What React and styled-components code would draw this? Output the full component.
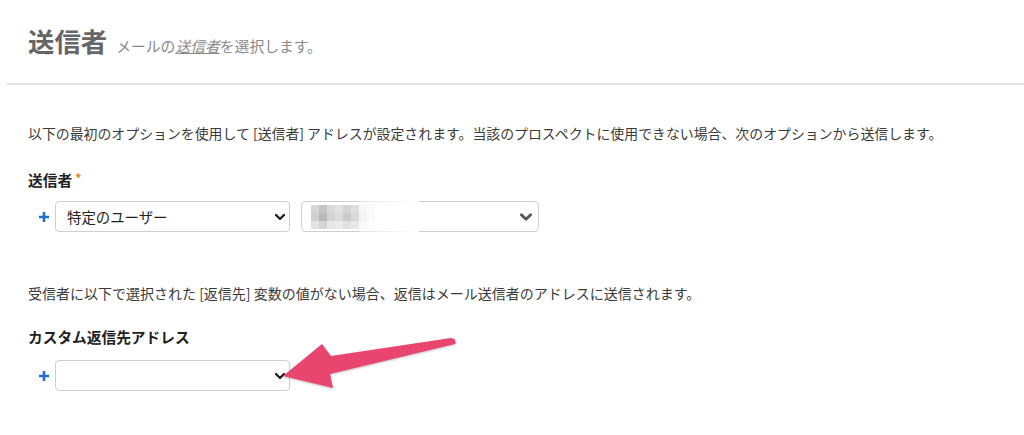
import React from "react";
import styled, { createGlobalStyle } from "styled-components";

const GlobalStyle = createGlobalStyle`
  body {
    margin: 0;
    background: #fff;
    font-family: "Noto Sans CJK JP", "Noto Sans", sans-serif;
    color: #333;
  }
`;

const Page = styled.div`
  position: relative;
  width: 1024px;
  height: 435px;
  overflow: hidden;
`;

const Header = styled.header`
  margin-left: 7px;
  padding: 22px 0 0 21px;
  height: 61px;
  border-bottom: 2px solid #e2e2e2;
  display: flex;
  align-items: baseline;
  gap: 9px;
`;

const Title = styled.h1`
  margin: 0;
  font-size: 26.4px;
  line-height: 38px;
  font-weight: 700;
  color: #666;
`;

const Subtitle = styled.span`
  font-size: 14.8px;
  color: #8a8a8a;

  em {
    font-style: italic;
    text-decoration: underline;
  }
`;

const Content = styled.main`
  padding-left: 28px;
`;

const Note = styled.p`
  margin: ${(p) => p.$top}px 0 0;
  font-size: ${(p) => p.$size}px;
  line-height: 20px;
  color: #3a3a3a;
`;

const Label = styled.div`
  margin-top: ${(p) => p.$top}px;
  font-size: 14.7px;
  line-height: 20px;
  font-weight: 700;
  color: #222;
`;

const Required = styled.span`
  color: #e8892b;
  font-size: 13px;
  font-weight: 700;
  vertical-align: top;
  line-height: 16px;
  margin-left: 3px;
`;

const Row = styled.div`
  margin-top: ${(p) => p.$top}px;
  padding-left: 10px;
  display: flex;
  align-items: center;
  gap: 5px;
`;

const PlusIcon = styled.svg`
  flex: none;
  width: 12px;
  height: 12px;
`;

const Plus = () => (
  <PlusIcon viewBox="0 0 12 12">
    <path d="M6 1 V11 M1 6 H11" stroke="#1f6fd1" strokeWidth="2.6" />
  </PlusIcon>
);

const Select = styled.div`
  position: relative;
  box-sizing: border-box;
  width: ${(p) => p.$w}px;
  height: 31px;
  margin-right: ${(p) => p.$mr || 0}px;
  border: 1px solid #cfcfcf;
  border-radius: 4px;
  display: flex;
  align-items: center;
  justify-content: space-between;
  padding: 0 ${(p) => p.$pr || 4}px 0 11px;
  font-size: 14.4px;
  color: #222;
`;

const Blur = styled.div`
  display: grid;
  grid-template-columns: repeat(8, 8px);
  grid-auto-rows: 8px;
  margin-left: -2px;
  position: relative;

  &::after {
    content: "";
    position: absolute;
    left: 48px;
    top: -4px;
    width: 60px;
    height: 32px;
    background: linear-gradient(90deg, rgba(255, 255, 255, 0.4), #fff);
  }
`;

const Cell = styled.span`
  background: ${(p) => p.$c};
`;

const Chevron = ({ color = "#222", size = 10 }) => (
  <svg width={size + 2} height={size} viewBox="0 0 12 10">
    <path
      d="M2 3 L6 7 L10 3"
      fill="none"
      stroke={color}
      strokeWidth="2.4"
      strokeLinecap="round"
      strokeLinejoin="round"
    />
  </svg>
);

const Arrow = styled.svg`
  position: absolute;
  left: 0;
  top: 0;
  pointer-events: none;
  filter: drop-shadow(0 1px 1px rgba(0, 0, 0, 0.25));
`;

const blurColors = [
  "#d6d6d6", "#c4c4c4", "#d9d9d9", "#e2e2e2", "#d4d4d4", "#dedede", "#f0f0f0", "#f7f7f7",
  "#cfcfcf", "#b9b9b9", "#d2d2d2", "#dcdcdc", "#cbcbcb", "#d8d8d8", "#eeeeee", "#f6f6f6",
  "#e3e3e3", "#d5d5d5", "#e6e6e6", "#ebebeb", "#e1e1e1", "#e8e8e8", "#f4f4f4", "#fafafa",
];

export default function App() {
  return (
    <Page>
      <GlobalStyle />
      <Header>
        <Title>送信者</Title>
        <Subtitle>
          メールの<em>送信者</em>を選択します。
        </Subtitle>
      </Header>
      <Content>
        <Note $top={38} $size={13.9}>
          以下の最初のオプションを使用して [送信者] アドレスが設定されます。当該のプロスペクトに使用できない場合、次のオプションから送信します。
        </Note>
        <Label $top={27}>
          送信者<Required>*</Required>
        </Label>
        <Row $top={11}>
          <Plus />
          <Select $w={235} $mr={6} $pr={3}>
            <span>特定のユーザー</span>
            <Chevron />
          </Select>
          <Select $w={238} $pr={5}>
            <Blur>
              {blurColors.map((c, i) => (
                <Cell key={i} $c={c} />
              ))}
            </Blur>
            <Chevron color="#555" size={12} />
          </Select>
        </Row>
        <Note $top={51} $size={14}>
          受信者に以下で選択された [返信先] 変数の値がない場合、返信はメール送信者のアドレスに送信されます。
        </Note>
        <Label $top={24}>カスタム返信先アドレス</Label>
        <Row $top={13}>
          <Plus />
          <Select $w={235} $pr={3}>
            <span />
            <Chevron />
          </Select>
        </Row>
      </Content>
      <Arrow width="1024" height="435" viewBox="0 0 1024 435">
        <path
          d="M283 376 L322 344 L331 356 L451 338 Q457 339 455 344 L330 374 L333 388 Z"
          fill="#e9466f"
          strokeLinejoin="round"
        />
      </Arrow>
    </Page>
  );
}
